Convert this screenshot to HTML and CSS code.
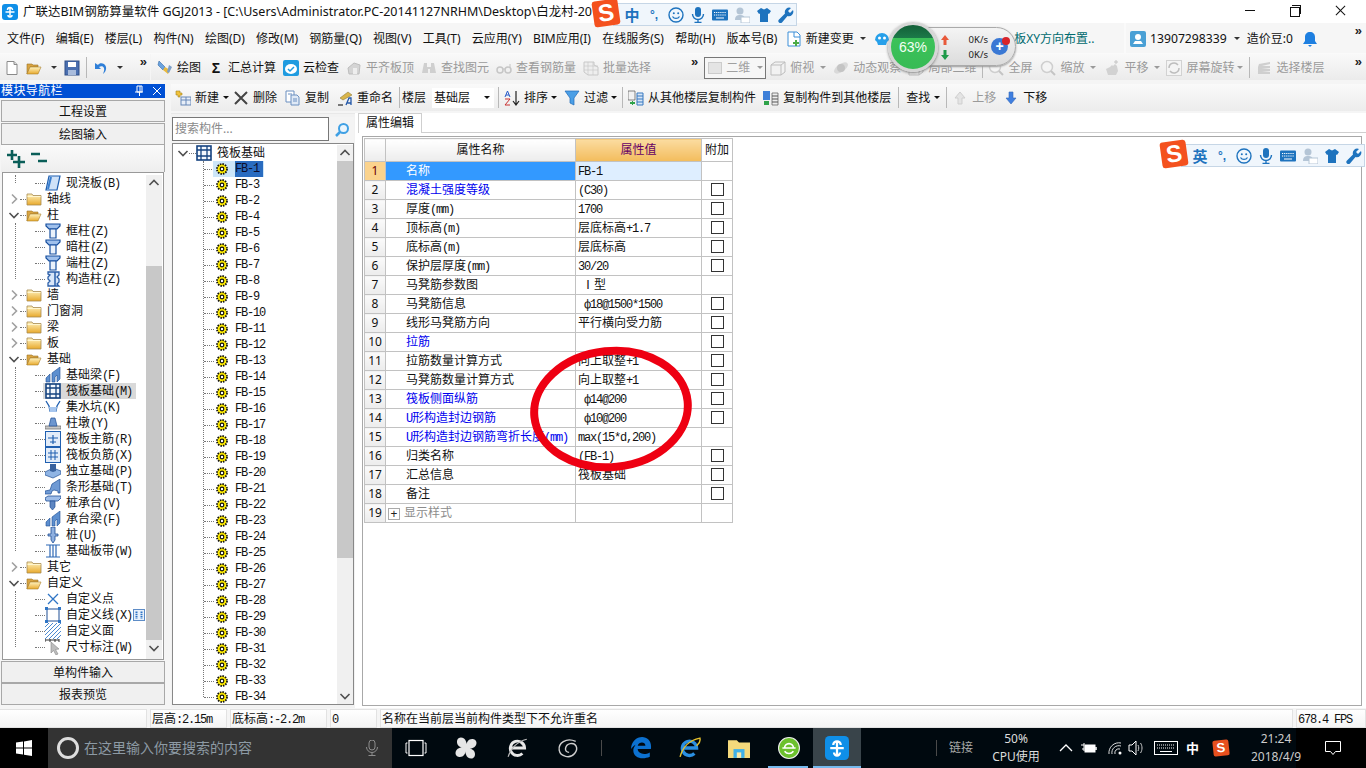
FILE: index.html
```html
<!DOCTYPE html>
<html lang="zh-CN">
<head>
<meta charset="utf-8">
<title>广联达BIM钢筋算量软件 GGJ2013</title>
<link rel="stylesheet" href="styles.css">
</head>
<body>
<svg class="defs" xmlns="http://www.w3.org/2000/svg">
<defs>
<linearGradient id="gf" x1="0" y1="0" x2="0" y2="1"><stop offset="0" stop-color="#fff3c0"/><stop offset="1" stop-color="#e8a92c"/></linearGradient>
<symbol id="app" viewBox="0 0 16 16"><rect width="16" height="16" rx="3" fill="#0f8fe8"/><path d="M8 3.500v9M3.500 8h9M5.500 6a2 2 0 0 1 5 0M6 11a2 2 0 0 0 4 0" fill="none" stroke="#fff" stroke-width="1.500"/></symbol>
<symbol id="doc" viewBox="0 0 16 16"><path d="M3 1.500h7l3 3v10H3z" fill="#fff" stroke="#8a8a8a"/><path d="M10 1.500v3h3" fill="#ddd" stroke="#8a8a8a"/></symbol>
<symbol id="open" viewBox="0 0 16 16"><path d="M1 4h5l1 1h5v2H4L1 14z" fill="#d9a441" stroke="#9a7326" stroke-width=".6"/><path d="M4 7h11l-3 7H1z" fill="url(#gf)" stroke="#a9802d" stroke-width=".6"/></symbol>
<symbol id="folder" viewBox="0 0 16 16"><path d="M1 3h5l1 1.500h8V14H1z" fill="url(#gf)" stroke="#a78a52" stroke-width=".8"/><path d="M1.500 5.500h13" stroke="#fff6cf"/></symbol>
<symbol id="save" viewBox="0 0 16 16"><rect x="1" y="1" width="14" height="14" fill="#4a6fb0" stroke="#2f4f88"/><rect x="4" y="2" width="8" height="5" fill="#fff"/><rect x="4" y="10" width="8" height="5" fill="#a9bcdc"/></symbol>
<symbol id="undo" viewBox="0 0 16 16"><path d="M3 3v6h6L7 7c3-2 6 0 5 4l-1 3c4-3 4-8 1-10-2-1.500-5-1-6 1z" fill="#2f7fd8"/></symbol>
<symbol id="brush" viewBox="0 0 16 16"><path d="M2 1l6 6-2 3-5-5z" fill="#6aa2de" stroke="#346ba8" stroke-width=".6"/><path d="M6 10l2-3 5 3-2 4z" fill="#e9b93c"/><path d="M12 5l3 2-3 6-2-1z" fill="#7c9fc8"/></symbol>
<symbol id="cloud" viewBox="0 0 16 16"><rect width="16" height="16" rx="2" fill="#1f9be0"/><ellipse cx="8" cy="9" rx="6" ry="5" fill="#fff"/><path d="M5 9l2 2 4-4" fill="none" stroke="#1f9be0" stroke-width="1.500"/></symbol>
<symbol id="gblock" viewBox="0 0 16 16"><path d="M2 8l6-5 6 2-1 9H3z" fill="#d4d4d4" stroke="#bdbdbd"/><path d="M7 8h4v6H7z" fill="#eee"/></symbol>
<symbol id="gbin" viewBox="0 0 16 16"><path d="M3 3h3v4h4V3h3l2 10H9V9H7v4H1z" fill="#cfcfcf"/></symbol>
<symbol id="gglass" viewBox="0 0 16 16"><circle cx="4" cy="10" r="3" fill="none" stroke="#c6c6c6" stroke-width="1.500"/><circle cx="12" cy="10" r="3" fill="none" stroke="#c6c6c6" stroke-width="1.500"/><path d="M7 9h2M14 7V4" stroke="#c6c6c6"/></symbol>
<symbol id="ggrid" viewBox="0 0 16 16"><path d="M1 2h10v3l4 2v8H5l-4-3z" fill="#eee" stroke="#c8c8c8"/><path d="M1 6h14M1 10h14M5 2v13M10 2v13" stroke="#c8c8c8" stroke-width=".7"/></symbol>
<symbol id="gbox" viewBox="0 0 16 16"><path d="M1 5l4-3h10v10l-4 3H1z" fill="#f2f2f2" stroke="#bdbdbd"/><path d="M1 5h10v10M11 5l4-3" fill="none" stroke="#bdbdbd"/></symbol>
<symbol id="gorbit" viewBox="0 0 16 16"><ellipse cx="8" cy="8" rx="8" ry="4" transform="rotate(-35 8 8)" fill="#d9d9d9"/><circle cx="8" cy="8" r="4" fill="#c4c4c4"/></symbol>
<symbol id="gzoom" viewBox="0 0 16 16"><circle cx="7" cy="7" r="5.500" fill="#f5f5f5" stroke="#cfcfcf" stroke-width="1.500"/><path d="M11 11l4 4" stroke="#c4c4c4" stroke-width="2"/></symbol>
<symbol id="ghand" viewBox="0 0 16 16"><path d="M2 9l4-2 2-2 1 1 2-2 2 2 1 5-2 4H4z" fill="#d2d2d2"/><path d="M12 0v4M10 2h4" stroke="#c4c4c4"/></symbol>
<symbol id="grot" viewBox="0 0 16 16"><rect x=".5" y=".5" width="15" height="15" fill="#f4f4f4" stroke="#d2d2d2"/><path d="M3 8a5 5 0 0 1 9-3M13 8a5 5 0 0 1-9 3" fill="none" stroke="#bdbdbd" stroke-width="1.500"/></symbol>
<symbol id="gfloor" viewBox="0 0 16 16"><path d="M3 4l11-2v2L6 6h8v2H6l8 1v2H6l8 1v2H2V7z" fill="#cfcfcf"/></symbol>
<symbol id="newc" viewBox="0 0 16 16"><path d="M2 1h9l3 3v11H2z" fill="#fff" stroke="#3d8fd8"/><path d="M8 1v5h6" fill="none" stroke="#3d8fd8"/><path d="M9 9h2v2h2v2h-2v2H9v-2H7v-2h2z" fill="#4cab46"/></symbol>
<symbol id="face" viewBox="0 0 16 16"><path d="M1 9a7 7 0 0 1 14 0l-2 2-1 3H4l-1-3z" fill="#27a0ea"/><circle cx="5.500" cy="7" r="1.500" fill="#fff"/><circle cx="10.500" cy="7" r="1.500" fill="#fff"/></symbol>
<symbol id="user" viewBox="0 0 16 16"><rect width="16" height="16" rx="2" fill="#4aa0d5"/><circle cx="8" cy="6" r="3" fill="#fff"/><path d="M3 13h10l-2-3H5z" fill="#fff"/></symbol>
<symbol id="bell" viewBox="0 0 16 16"><path d="M8 1c3 0 5 2 5 5v4l2 3H1l2-3V6c0-3 2-5 5-5z" fill="#1e7fe0"/><path d="M6 14h4l-2 2z" fill="#1e7fe0"/></symbol>
<symbol id="newb" viewBox="0 0 16 16"><path d="M1 1h4v2h2v2H5v2H3V5H1z" fill="#f2c23a" stroke="#a38421" stroke-width=".6"/><rect x="6" y="7" width="10" height="8" fill="#e7eef8" stroke="#6787b7"/><path d="M6 10h10M11 7v8" stroke="#6787b7"/></symbol>
<symbol id="del" viewBox="0 0 16 16"><path d="M2 2l12 12M14 2L2 14" stroke="#444" stroke-width="2"/></symbol>
<symbol id="copy" viewBox="0 0 16 16"><path d="M1 1h8v11H1z" fill="#fff" stroke="#6b8fc0"/><path d="M6 5h6l2 2v8H6z" fill="#dfe9f6" stroke="#6b8fc0"/><path d="M3 4h4M8 9h4M8 11h4" stroke="#6b8fc0"/></symbol>
<symbol id="rename" viewBox="0 0 16 16"><path d="M3 8l8-6 4 3-9 5z" fill="#d9b54a" stroke="#8d7a3c" stroke-width=".6"/><path d="M9 15l3-7h2v7M10.500 13h3" fill="none" stroke="#2458a8" stroke-width="1.300"/><path d="M1 15h5" stroke="#777" stroke-width="2"/></symbol>
<symbol id="sort" viewBox="0 0 16 16"><path d="M1 7l2.500-6L6 7M2 5h3" fill="none" stroke="#2458c8"/><path d="M1 9h5L1 15h5" fill="none" stroke="#c83030"/><path d="M12 1v13M9 11l3 4 3-4" fill="none" stroke="#222" stroke-width="1.200"/></symbol>
<symbol id="filter" viewBox="0 0 16 16"><path d="M1 1h14L10 8v7l-4-2V8z" fill="#4b9fe6" stroke="#1f6ab8" stroke-width=".7"/></symbol>
<symbol id="fcopy" viewBox="0 0 16 16"><path d="M0 1h7v9H0z" fill="#f2f2f2" stroke="#555" stroke-width=".7"/><path d="M9 3h6v12H9z" fill="#d8e6f6" stroke="#3778c0"/><path d="M9 6h6M9 9h6M9 12h6" stroke="#3778c0"/><path d="M2 12h2v-1h1v1h2v2H5v1H4v-1H2z" fill="#2fa34a"/></symbol>
<symbol id="tcopy" viewBox="0 0 16 16"><path d="M0 1h7v9H0z" fill="#3d7fd8"/><path d="M9 3h6v12H9z" fill="#eee" stroke="#555" stroke-width=".7"/><path d="M9 6h6M9 9h6M9 12h6" stroke="#555"/><path d="M1 11h5v4H1z" fill="#2fa34a"/></symbol>
<symbol id="up" viewBox="0 0 16 16"><path d="M8 2l5 6h-3v6H6V8H3z" fill="#e4e4e4" stroke="#cfcfcf"/></symbol>
<symbol id="down" viewBox="0 0 16 16"><path d="M6 2h4v6h3l-5 6-5-6h3z" fill="#3f7fe0" stroke="#3468b8" stroke-width=".6"/></symbol>
<symbol id="search" viewBox="0 0 16 16"><circle cx="9.500" cy="6.500" r="4.500" fill="#eaf5fd" stroke="#3fa0e4" stroke-width="2"/><path d="M6 10l-4 4" stroke="#3fa0e4" stroke-width="2.500"/></symbol>
<symbol id="plus2" viewBox="0 0 18 18"><path d="M5 0v10M0 5h10M12 6v12M6 12h12" stroke="#0a5e58" stroke-width="2.600"/></symbol>
<symbol id="minus2" viewBox="0 0 18 18"><path d="M1 4h9M8 11h9" stroke="#0a5e58" stroke-width="2.600"/></symbol>
<symbol id="chevr" viewBox="0 0 12 12"><path d="M4 1.500L8.500 6 4 10.500" fill="none" stroke="#a0a0a0" stroke-width="1.600"/></symbol>
<symbol id="chevd" viewBox="0 0 12 12"><path d="M1.500 4L6 8.500 10.500 4" fill="none" stroke="#505050" stroke-width="1.600"/></symbol>
<symbol id="chevu" viewBox="0 0 12 12"><path d="M1.500 8L6 3.500 10.500 8" fill="none" stroke="#505050" stroke-width="1.600"/></symbol>
<symbol id="slab" viewBox="0 0 16 16"><path d="M4 1h11l-3 14H1z" fill="#cfe2f8" stroke="#1f5fb0" stroke-width="1.200"/><path d="M3 14L6 2" stroke="#3a7fd0" stroke-width="2"/></symbol>
<symbol id="tcol" viewBox="0 0 16 16"><path d="M1 1h14v2l-3 3H4L1 3z" fill="#9fc0ec" stroke="#174f9f" stroke-width="1.200"/><path d="M5 6h6v9H5z" fill="#e9f1fb" stroke="#174f9f" stroke-width="1.200"/></symbol>
<symbol id="gcol" viewBox="0 0 16 16"><path d="M3 1h11v3l-2 2 2 2v3l-2 2 2 2H3v-3l2-2-2-2V6l2-2-2-1z" fill="#d8e6f8" stroke="#2a5ea8" stroke-width="1.300"/><path d="M10 1v14" stroke="#2a5ea8" stroke-width="1.500"/></symbol>
<symbol id="beam" viewBox="0 0 16 16"><path d="M1 15v-4l4-4v8zM7 15V6l8-6v12l-3 3V8l-2 2v5z" fill="#5d8fcf" stroke="#1f4f95" stroke-width=".6"/></symbol>
<symbol id="raft" viewBox="0 0 16 16"><rect x="1" y="1" width="14" height="14" fill="#f4f8fd" stroke="#14427f" stroke-width="1.600"/><path d="M1 5h14M1 11h14M5 1v14M11 1v14" stroke="#14427f" stroke-width="1.300"/></symbol>
<symbol id="pit" viewBox="0 0 16 16"><path d="M1 2l3 5 1 5h6l1-5 3-5" fill="none" stroke="#1f5fb0" stroke-width="1.300"/><path d="M4 8h8l-1 5H5z" fill="#a7c6ee"/></symbol>
<symbol id="pier" viewBox="0 0 16 16"><path d="M0 11h16v3H0z" fill="#c8c8c8" stroke="#666" stroke-width=".7"/><path d="M6 3h4l2 8H4z" fill="#6d96cf" stroke="#1f4f95" stroke-width=".7"/></symbol>
<symbol id="rmain" viewBox="0 0 16 16"><rect x=".5" y=".5" width="15" height="15" fill="#e2ecf9" stroke="#1f5fb0"/><path d="M3 7h10M8 4v9M5 11h6" stroke="#1f5fb0" stroke-width="1.200" fill="none"/></symbol>
<symbol id="rneg" viewBox="0 0 16 16"><rect x=".5" y=".5" width="15" height="15" fill="#e2ecf9" stroke="#1f5fb0"/><path d="M3 6h10M3 10h10M6 3v10M10 3v10" stroke="#1f5fb0"/></symbol>
<symbol id="foot" viewBox="0 0 16 16"><path d="M0 9l8-4 8 3v3l-8 4-8-3z" fill="#8fb4e4" stroke="#1f4f95" stroke-width=".7"/><path d="M5 1h6v7l-3 1-3-1z" fill="#39629e"/></symbol>
<symbol id="strip" viewBox="0 0 16 16"><path d="M0 15v-3l5-1 2-6 8-5v14h-2V12l-4-1-2 1-1 3z" fill="#6f9ad4" stroke="#1f4f95" stroke-width=".7"/></symbol>
<symbol id="cap" viewBox="0 0 16 16"><path d="M0 3l3-2h13v2l-3 3H1z" fill="#9ebde9" stroke="#1f4f95" stroke-width=".8"/><path d="M5 6h5v6l-2.500 3L5 12z" fill="#5d86c2" stroke="#1f4f95" stroke-width=".7"/></symbol>
<symbol id="pile" viewBox="0 0 16 16"><path d="M6 0h4v7h3v2h-3v4l-2 3-2-3V9H3V7h3z" fill="#8fb0e0" stroke="#1f4f95" stroke-width=".8"/></symbol>
<symbol id="band" viewBox="0 0 16 16"><path d="M1 2h14M1 14h14M5 2v12M11 2v12M8 2v12" stroke="#2d68b5" stroke-width="1.200"/></symbol>
<symbol id="pt" viewBox="0 0 16 16"><path d="M3 3l10 10M13 3L3 13" stroke="#2f75c5" stroke-width="1.300"/></symbol>
<symbol id="ln" viewBox="0 0 16 16"><rect x="2" y="2" width="12" height="12" fill="none" stroke="#1f4f95"/><path d="M0 0h3v3H0zM13 0h3v3h-3zM0 13h3v3H0zM13 13h3v3h-3z" fill="#2f75c5"/></symbol>
<symbol id="hatch" viewBox="0 0 16 16"><path d="M0 4l4-4M0 8l8-8M0 12L12 0M0 16L16 0M4 16L16 4M8 16l8-8M12 16l4-4" stroke="#4c8ad0"/></symbol>
<symbol id="dim" viewBox="0 0 16 16"><path d="M0 1h14M0 0v3M5 0v3M10 0v3M14 0v3" stroke="#333"/><path d="M6 3l8 7-3.500.5L13 15l-2 1-2.500-4.500L6 14z" fill="#bdbdbd" stroke="#888" stroke-width=".6"/></symbol>
<symbol id="fb" viewBox="0 0 12 12"><circle cx="6" cy="6" r="5" fill="#ffec00" stroke="#111" stroke-dasharray="1.500 1.100" stroke-width="1.800"/><circle cx="6" cy="6" r="1.800" fill="#fff" stroke="#111" stroke-width="1.200"/></symbol>
<symbol id="columns" viewBox="0 0 12 12"><rect x=".5" y=".5" width="11" height="11" fill="#e8f1fb" stroke="#5e8cc6"/><path d="M3.500 2.500v7M8.500 2.500v7" stroke="#2f75c5" stroke-width="2" stroke-dasharray="1.500 .7"/></symbol>
<symbol id="smile" viewBox="0 0 16 16"><circle cx="8" cy="8" r="7" fill="none" stroke="#1e73be" stroke-width="1.400"/><circle cx="5.800" cy="6.200" r="1" fill="#1e73be"/><circle cx="10.200" cy="6.200" r="1" fill="#1e73be"/><path d="M4.500 9.500c1.500 2.500 5.500 2.500 7 0" fill="none" stroke="#1e73be" stroke-width="1.300"/></symbol>
<symbol id="mic" viewBox="0 0 16 16"><rect x="5" y="0" width="6" height="10" rx="3" fill="#1e73be"/><path d="M2.500 7a5.500 5.500 0 0 0 11 0M8 12.500V15M4.500 15.500h7" fill="none" stroke="#1e73be" stroke-width="1.400"/></symbol>
<symbol id="kb" viewBox="0 0 16 16"><rect y="2.500" width="16" height="11" rx="1" fill="#1e73be"/><path d="M2 5.500h12M2 8h12" stroke="#fff" stroke-dasharray="1.200 .9"/><path d="M4 11h8" stroke="#fff"/></symbol>
<symbol id="ppl" viewBox="0 0 16 16"><circle cx="6" cy="4" r="3.500" fill="#b4c5d6"/><path d="M1 13c0-4 2-5 5-5s5 1 5 5z" fill="#b4c5d6"/><rect x="7" y="10" width="9" height="6" fill="#fff" stroke="#b4c5d6"/></symbol>
<symbol id="shirt" viewBox="0 0 16 16"><path d="M5 1l3 1.500L11 1l4 3-2 3-1-.5V15H4V6.500L3 7 1 4z" fill="#1e73be"/></symbol>
<symbol id="wrench" viewBox="0 0 16 16"><path d="M15 3l-3 3-2-2 3-3a4.500 4.500 0 0 0-6 5.500L1 12.500a2 2 0 0 0 3 3L9.500 9A4.500 4.500 0 0 0 15 3z" fill="#1e73be"/></symbol>
<symbol id="win" viewBox="0 0 16 16"><path d="M0 2.500L7 1.500v6H0zM8 1.400L16 0v7.500H8zM0 8.500h7v6l-7-1zM8 8.500h8V16l-8-1.300z" fill="#fff"/></symbol>
<symbol id="tmic" viewBox="0 0 16 16"><rect x="5" y="0" width="6" height="10" rx="3" fill="none" stroke="#8d8d8d"/><path d="M2.500 7a5.500 5.500 0 0 0 11 0M8 12.500V15M4.500 15.500h7" fill="none" stroke="#8d8d8d"/></symbol>
<symbol id="tview" viewBox="0 0 22 16"><rect x="4" y=".5" width="14" height="15" fill="none" stroke="#fff" stroke-width="1.200"/><path d="M2.500 3H1v10h1.500M19.500 3H21v10h-1.500" fill="none" stroke="#fff"/></symbol>
<symbol id="fan" viewBox="0 0 20 20"><path d="M10 10C4 10 1 7 2 3s7-3 8 1c1 2 0 4 0 6zM10 10c0-6 3-9 7-8s3 7-1 8c-2 1-4 0-6 0zM10 10c6 0 9 3 8 7s-7 3-8-1c-1-2 0-4 0-6zM10 10c0 6-3 9-7 8s-3-7 1-8c2-1 4 0 6 0z" fill="#e6e6e6"/></symbol>
<symbol id="eie" viewBox="0 0 20 20"><path d="M3 10h13a6.500 6.500 0 1 0-2 5" fill="none" stroke="#e8e8e8" stroke-width="2.600"/><path d="M1 18c2-7 8-14 17-16" fill="none" stroke="#bbb"/></symbol>
<symbol id="swirl" viewBox="0 0 20 20"><path d="M17 4C8 0 1 6 2 12s10 8 14 3 1-10-4-9-6 8-1 8" fill="none" stroke="#cfcfcf" stroke-width="1.300"/></symbol>
<symbol id="edge" viewBox="0 0 20 20"><path d="M1 11C1 4 6 0 11 0s9 4 8 11H7c0 4 6 6 11 3v4c-7 3-15 1-15-6 0-2 1-3 2-5 0 0-2 1-4 4zM7 8h7c0-4-6-4-7 0z" fill="#0c71d0"/></symbol>
<symbol id="ie" viewBox="0 0 20 20"><path d="M3 10h13a6.500 6.500 0 1 0-2 5" fill="none" stroke="#2a8fe0" stroke-width="3"/><path d="M1 18C3 10 9 3 19 1c1 4-2 6-3 7" fill="none" stroke="#e6c22e" stroke-width="1.300"/></symbol>
<symbol id="expl" viewBox="0 0 20 20"><path d="M0 3h8l2 2h10v14H0z" fill="#f4d97c"/><rect x="5" y="11" width="10" height="8" fill="#3fb0e8"/><rect x="8" y="14" width="4" height="5" fill="#fbe9a8"/></symbol>
<symbol id="s360" viewBox="0 0 20 20"><circle cx="10" cy="10" r="9.500" fill="#6cc12d" stroke="#eee"/><path d="M4 10h12M6 10a4 4 0 0 1 8 0M6 13a5 5 0 0 0 8 0" fill="none" stroke="#fff" stroke-width="1.500"/></symbol>
<symbol id="caret-up" viewBox="0 0 16 16"><path d="M2 11l6-6 6 6" fill="none" stroke="#fff" stroke-width="1.300"/></symbol>
<symbol id="batt" viewBox="0 0 16 16"><path d="M0 5h3M1 9h2M3 3v8" stroke="#fff"/><rect x="4" y="5" width="10" height="7" fill="#fff" stroke="#fff"/><path d="M15 7v3" stroke="#fff" stroke-width="1.500"/></symbol>
<symbol id="wifi" viewBox="0 0 16 16"><path d="M2 14a10 10 0 0 1 12-11M5 14a7 7 0 0 1 9-8M8 14a4 4 0 0 1 5-5" fill="none" stroke="#ddd"/><circle cx="13" cy="13" r="1.500" fill="#fff"/></symbol>
<symbol id="vol" viewBox="0 0 16 16"><path d="M1 5h3l4-4v14l-4-4H1z" fill="none" stroke="#fff"/><path d="M10 5c1 2 1 4 0 6M12.500 3c2 3 2 7 0 10" fill="none" stroke="#ccc"/></symbol>
<symbol id="tkb" viewBox="0 0 24 16"><rect x=".5" y="1.500" width="23" height="13" fill="none" stroke="#fff"/><path d="M3 5h18M3 8h18" stroke="#fff" stroke-dasharray="1 1"/><path d="M6 11.500h12" stroke="#fff"/></symbol>
<symbol id="note" viewBox="0 0 16 16"><path d="M.5 1.500h15v10h-5l-2.500 3-2.500-3h-5z" fill="none" stroke="#fff"/></symbol>
<symbol id="pin" viewBox="0 0 12 12"><path d="M4 1h5v6H4zM2 7h8M6.500 7v4M7 1v6" fill="none" stroke="#fff"/></symbol>
<symbol id="close" viewBox="0 0 12 12"><path d="M2 2l8 8M10 2l-8 8" stroke="#fff"/></symbol>
<symbol id="aup" viewBox="0 0 8 10"><path d="M4 0l4 5H5.500v5h-3V5H0z" fill="#e8593a"/></symbol>
<symbol id="adn" viewBox="0 0 8 10"><path d="M2.500 0h3v5H8l-4 5-4-5h2.500z" fill="#1f9a4a"/></symbol>
</defs>
</svg>

<div class="app">
  <header class="titlebar">
    <svg class="i app-icon"><use href="#app"/></svg>
    <span class="title-text">广联达BIM钢筋算量软件 GGJ2013 - [C:\Users\Administrator.PC-20141127NRHM\Desktop\白龙村-20</span>
    <div class="winbtns"><span class="wb wb-min"></span><span class="wb wb-max"></span><span class="wb wb-close"></span></div>
  </header>

  <nav class="menubar">
    <div class="menu-main">
      <span>文件(F)</span><span>编辑(E)</span><span>楼层(L)</span><span>构件(N)</span><span>绘图(D)</span><span>修改(M)</span><span>钢筋量(Q)</span><span>视图(V)</span><span>工具(T)</span><span>云应用(Y)</span><span>BIM应用(I)</span><span>在线服务(S)</span><span>帮助(H)</span><span>版本号(B)</span>
      <span class="t menu-new"><svg class="i"><use href="#newc"/></svg>新建变更</span><span class="caret"></span>
      <svg class="i menu-face"><use href="#face"/></svg>
      <span class="teal">板XY方向布置..</span>
    </div>
    <div class="menu-user">
      <svg class="i"><use href="#user"/></svg><span class="phone">13907298339</span><span class="caret"></span><span class="m-l6">造价豆:0</span><svg class="i m-l9"><use href="#bell"/></svg><span class="more">»</span>
    </div>
  </nav>

  <div class="toolbar1">
    <div class="band band-quick">
      <svg class="i"><use href="#doc"/></svg>
      <svg class="i m-l6"><use href="#open"/></svg><span class="caret m-l8"></span>
      <svg class="i m-l6"><use href="#save"/></svg><span class="vsep m-l6"></span>
      <svg class="i m-l5"><use href="#undo"/></svg><span class="caret m-l8"></span><span class="more">»</span>
    </div>
    <div class="band band-tools">
      <span class="t"><svg class="i"><use href="#brush"/></svg>绘图</span>
      <span class="t m-l7"><span class="sigma">Σ</span>汇总计算</span>
      <span class="t m-l7"><svg class="i"><use href="#cloud"/></svg>云检查</span>
      <span class="t m-l7 off"><svg class="i"><use href="#gblock"/></svg>平齐板顶</span>
      <span class="t m-l7 off"><svg class="i"><use href="#gbin"/></svg>查找图元</span>
      <span class="t m-l7 off"><svg class="i"><use href="#gglass"/></svg>查看钢筋量</span>
      <span class="t m-l7 off"><svg class="i"><use href="#ggrid"/></svg>批量选择</span>
      <span class="more m-l40">»</span>
      <span class="combo2 m-l6"><span class="swatch"></span>二维<span class="caret grey"></span></span>
      <span class="t m-l4 off"><svg class="i"><use href="#gbox"/></svg>俯视</span><span class="caret grey m-l5"></span>
      <span class="t m-l6 off"><svg class="i"><use href="#gorbit"/></svg>动态观察</span>
      <span class="t m-l7 off"><svg class="i"><use href="#gbox"/></svg>局部二维</span><span class="vsep m-l6"></span>
      <span class="t m-l5 off"><svg class="i"><use href="#gzoom"/></svg>全屏</span>
      <span class="t m-l8 off"><svg class="i"><use href="#gzoom"/></svg>缩放</span><span class="caret grey m-l5"></span>
      <span class="t m-l7 off"><svg class="i"><use href="#ghand"/></svg>平移</span><span class="caret grey m-l5"></span>
      <span class="t m-l5 off"><svg class="i"><use href="#grot"/></svg>屏幕旋转</span><span class="caret grey m-l2"></span><span class="vsep m-l5"></span>
      <span class="t m-l6 off"><svg class="i"><use href="#gfloor"/></svg>选择楼层</span>
      <span class="more more-end">»</span>
    </div>
  </div>

  <main class="workspace">
    <aside class="nav">
      <div class="nav-head"><span>模块导航栏</span><svg class="nav-ic"><use href="#pin"/></svg><svg class="nav-ic"><use href="#close"/></svg></div>
      <div class="nav-btn nav-first">工程设置</div>
      <div class="nav-btn">绘图输入</div>
      <div class="nav-ctl"><svg class="ctl"><use href="#plus2"/></svg><svg class="ctl"><use href="#minus2"/></svg></div>
      <div class="nav-box">
        <div class="tree">
          <div class="kids">
            <div class="tr"><span class="dash"></span><svg class="i"><use href="#slab"/></svg><span class="lb">现浇板<span class="lat">(B)</span></span></div>
          </div>
          <div class="tr top"><svg class="chev"><use href="#chevr"/></svg><span class="dash2"></span><svg class="i"><use href="#folder"/></svg><span class="lb">轴线</span></div>
          <div class="tr top"><svg class="chev"><use href="#chevd"/></svg><span class="dash2"></span><svg class="i"><use href="#open"/></svg><span class="lb">柱</span></div>
          <div class="kids">
            <div class="tr"><span class="dash"></span><svg class="i"><use href="#tcol"/></svg><span class="lb">框柱<span class="lat">(Z)</span></span></div>
            <div class="tr"><span class="dash"></span><svg class="i"><use href="#tcol"/></svg><span class="lb">暗柱<span class="lat">(Z)</span></span></div>
            <div class="tr"><span class="dash"></span><svg class="i"><use href="#tcol"/></svg><span class="lb">端柱<span class="lat">(Z)</span></span></div>
            <div class="tr"><span class="dash"></span><svg class="i"><use href="#gcol"/></svg><span class="lb">构造柱<span class="lat">(Z)</span></span></div>
          </div>
          <div class="tr top"><svg class="chev"><use href="#chevr"/></svg><span class="dash2"></span><svg class="i"><use href="#folder"/></svg><span class="lb">墙</span></div>
          <div class="tr top"><svg class="chev"><use href="#chevr"/></svg><span class="dash2"></span><svg class="i"><use href="#folder"/></svg><span class="lb">门窗洞</span></div>
          <div class="tr top"><svg class="chev"><use href="#chevr"/></svg><span class="dash2"></span><svg class="i"><use href="#folder"/></svg><span class="lb">梁</span></div>
          <div class="tr top"><svg class="chev"><use href="#chevr"/></svg><span class="dash2"></span><svg class="i"><use href="#folder"/></svg><span class="lb">板</span></div>
          <div class="tr top"><svg class="chev"><use href="#chevd"/></svg><span class="dash2"></span><svg class="i"><use href="#open"/></svg><span class="lb">基础</span></div>
          <div class="kids">
            <div class="tr"><span class="dash"></span><svg class="i"><use href="#beam"/></svg><span class="lb">基础梁<span class="lat">(F)</span></span></div>
            <div class="tr"><span class="dash"></span><span class="hl"><svg class="i"><use href="#raft"/></svg><span class="lb">筏板基础<span class="lat">(M)</span></span></span></div>
            <div class="tr"><span class="dash"></span><svg class="i"><use href="#pit"/></svg><span class="lb">集水坑<span class="lat">(K)</span></span></div>
            <div class="tr"><span class="dash"></span><svg class="i"><use href="#pier"/></svg><span class="lb">柱墩<span class="lat">(Y)</span></span></div>
            <div class="tr"><span class="dash"></span><svg class="i"><use href="#rmain"/></svg><span class="lb">筏板主筋<span class="lat">(R)</span></span></div>
            <div class="tr"><span class="dash"></span><svg class="i"><use href="#rneg"/></svg><span class="lb">筏板负筋<span class="lat">(X)</span></span></div>
            <div class="tr"><span class="dash"></span><svg class="i"><use href="#foot"/></svg><span class="lb">独立基础<span class="lat">(P)</span></span></div>
            <div class="tr"><span class="dash"></span><svg class="i"><use href="#strip"/></svg><span class="lb">条形基础<span class="lat">(T)</span></span></div>
            <div class="tr"><span class="dash"></span><svg class="i"><use href="#cap"/></svg><span class="lb">桩承台<span class="lat">(V)</span></span></div>
            <div class="tr"><span class="dash"></span><svg class="i"><use href="#beam"/></svg><span class="lb">承台梁<span class="lat">(F)</span></span></div>
            <div class="tr"><span class="dash"></span><svg class="i"><use href="#pile"/></svg><span class="lb">桩<span class="lat">(U)</span></span></div>
            <div class="tr"><span class="dash"></span><svg class="i"><use href="#band"/></svg><span class="lb">基础板带<span class="lat">(W)</span></span></div>
          </div>
          <div class="tr top"><svg class="chev"><use href="#chevr"/></svg><span class="dash2"></span><svg class="i"><use href="#folder"/></svg><span class="lb">其它</span></div>
          <div class="tr top"><svg class="chev"><use href="#chevd"/></svg><span class="dash2"></span><svg class="i"><use href="#open"/></svg><span class="lb">自定义</span></div>
          <div class="kids">
            <div class="tr"><span class="dash"></span><svg class="i"><use href="#pt"/></svg><span class="lb">自定义点</span></div>
            <div class="tr"><span class="dash"></span><svg class="i"><use href="#ln"/></svg><span class="lb">自定义线<span class="lat">(X)</span></span><svg class="col-ic"><use href="#columns"/></svg></div>
            <div class="tr"><span class="dash"></span><svg class="i"><use href="#hatch"/></svg><span class="lb">自定义面</span></div>
            <div class="tr"><span class="dash"></span><svg class="i"><use href="#dim"/></svg><span class="lb">尺寸标注<span class="lat">(W)</span></span></div>
          </div>
        </div>
        <div class="vs vs-nav"><span class="vs-arrow"><svg class="chev"><use href="#chevu"/></svg></span><span class="vs-space"></span><span class="vs-thumb"></span><span class="vs-arrow"><svg class="chev"><use href="#chevd"/></svg></span></div>
      </div>
      <div class="nav-btn nav-after">单构件输入</div>
      <div class="nav-btn">报表预览</div>
    </aside>

    <div class="right">
      <div class="toolbar2">
        <span class="t"><svg class="i"><use href="#newb"/></svg>新建</span><span class="caret dark m-l3"></span>
        <span class="t m-l3"><svg class="i"><use href="#del"/></svg>删除</span>
        <span class="t m-l8"><svg class="i"><use href="#copy"/></svg>复制</span>
        <span class="t m-l8"><svg class="i"><use href="#rename"/></svg>重命名</span>
        <span class="vsep m-l6"></span>
        <span class="m-l2">楼层</span>
        <span class="combo m-l6">基础层<span class="caret dark"></span></span>
        <span class="vsep m-l4"></span>
        <span class="t m-l5"><svg class="i"><use href="#sort"/></svg>排序</span><span class="caret dark m-l2"></span>
        <span class="t m-l6"><svg class="i"><use href="#filter"/></svg>过滤</span><span class="caret dark m-l2"></span>
        <span class="vsep m-l4"></span>
        <span class="t m-l5"><svg class="i"><use href="#fcopy"/></svg>从其他楼层复制构件</span>
        <span class="t m-l7"><svg class="i"><use href="#tcopy"/></svg>复制构件到其他楼层</span>
        <span class="vsep m-l7"></span>
        <span class="m-l7">查找</span><span class="caret dark m-l3"></span>
        <span class="vsep m-l5"></span>
        <span class="t m-l5 off"><svg class="i"><use href="#up"/></svg>上移</span>
        <span class="t m-l7"><svg class="i"><use href="#down"/></svg>下移</span>
      </div>

      <div class="panes">
        <section class="mid">
          <div class="searchrow"><div class="search-in">搜索构件...</div><div class="search-btn"><svg class="i"><use href="#search"/></svg></div></div>
          <div class="mid-box">
            <div class="tree tree-mid">
              <div class="tr"><svg class="chev chev-mid"><use href="#chevd"/></svg><span class="dash3"></span><svg class="i"><use href="#raft"/></svg><span class="lb">筏板基础</span></div>
              <div class="kids kids-mid">
                <div class="tr"><span class="dash4"></span><span class="sel"><svg class="fb"><use href="#fb"/></svg><span class="fbname fbname-on">FB-1</span></span></div>
                <div class="tr"><span class="dash4"></span><svg class="fb"><use href="#fb"/></svg><span class="fbname">FB-3</span></div>
                <div class="tr"><span class="dash4"></span><svg class="fb"><use href="#fb"/></svg><span class="fbname">FB-2</span></div>
                <div class="tr"><span class="dash4"></span><svg class="fb"><use href="#fb"/></svg><span class="fbname">FB-4</span></div>
                <div class="tr"><span class="dash4"></span><svg class="fb"><use href="#fb"/></svg><span class="fbname">FB-5</span></div>
                <div class="tr"><span class="dash4"></span><svg class="fb"><use href="#fb"/></svg><span class="fbname">FB-6</span></div>
                <div class="tr"><span class="dash4"></span><svg class="fb"><use href="#fb"/></svg><span class="fbname">FB-7</span></div>
                <div class="tr"><span class="dash4"></span><svg class="fb"><use href="#fb"/></svg><span class="fbname">FB-8</span></div>
                <div class="tr"><span class="dash4"></span><svg class="fb"><use href="#fb"/></svg><span class="fbname">FB-9</span></div>
                <div class="tr"><span class="dash4"></span><svg class="fb"><use href="#fb"/></svg><span class="fbname">FB-10</span></div>
                <div class="tr"><span class="dash4"></span><svg class="fb"><use href="#fb"/></svg><span class="fbname">FB-11</span></div>
                <div class="tr"><span class="dash4"></span><svg class="fb"><use href="#fb"/></svg><span class="fbname">FB-12</span></div>
                <div class="tr"><span class="dash4"></span><svg class="fb"><use href="#fb"/></svg><span class="fbname">FB-13</span></div>
                <div class="tr"><span class="dash4"></span><svg class="fb"><use href="#fb"/></svg><span class="fbname">FB-14</span></div>
                <div class="tr"><span class="dash4"></span><svg class="fb"><use href="#fb"/></svg><span class="fbname">FB-15</span></div>
                <div class="tr"><span class="dash4"></span><svg class="fb"><use href="#fb"/></svg><span class="fbname">FB-16</span></div>
                <div class="tr"><span class="dash4"></span><svg class="fb"><use href="#fb"/></svg><span class="fbname">FB-17</span></div>
                <div class="tr"><span class="dash4"></span><svg class="fb"><use href="#fb"/></svg><span class="fbname">FB-18</span></div>
                <div class="tr"><span class="dash4"></span><svg class="fb"><use href="#fb"/></svg><span class="fbname">FB-19</span></div>
                <div class="tr"><span class="dash4"></span><svg class="fb"><use href="#fb"/></svg><span class="fbname">FB-20</span></div>
                <div class="tr"><span class="dash4"></span><svg class="fb"><use href="#fb"/></svg><span class="fbname">FB-21</span></div>
                <div class="tr"><span class="dash4"></span><svg class="fb"><use href="#fb"/></svg><span class="fbname">FB-22</span></div>
                <div class="tr"><span class="dash4"></span><svg class="fb"><use href="#fb"/></svg><span class="fbname">FB-23</span></div>
                <div class="tr"><span class="dash4"></span><svg class="fb"><use href="#fb"/></svg><span class="fbname">FB-24</span></div>
                <div class="tr"><span class="dash4"></span><svg class="fb"><use href="#fb"/></svg><span class="fbname">FB-25</span></div>
                <div class="tr"><span class="dash4"></span><svg class="fb"><use href="#fb"/></svg><span class="fbname">FB-26</span></div>
                <div class="tr"><span class="dash4"></span><svg class="fb"><use href="#fb"/></svg><span class="fbname">FB-27</span></div>
                <div class="tr"><span class="dash4"></span><svg class="fb"><use href="#fb"/></svg><span class="fbname">FB-28</span></div>
                <div class="tr"><span class="dash4"></span><svg class="fb"><use href="#fb"/></svg><span class="fbname">FB-29</span></div>
                <div class="tr"><span class="dash4"></span><svg class="fb"><use href="#fb"/></svg><span class="fbname">FB-30</span></div>
                <div class="tr"><span class="dash4"></span><svg class="fb"><use href="#fb"/></svg><span class="fbname">FB-31</span></div>
                <div class="tr"><span class="dash4"></span><svg class="fb"><use href="#fb"/></svg><span class="fbname">FB-32</span></div>
                <div class="tr"><span class="dash4"></span><svg class="fb"><use href="#fb"/></svg><span class="fbname">FB-33</span></div>
                <div class="tr"><span class="dash4"></span><svg class="fb"><use href="#fb"/></svg><span class="fbname">FB-34</span></div>
              </div>
            </div>
            <div class="vs vs-mid"><span class="vs-arrow"><svg class="chev"><use href="#chevu"/></svg></span><span class="vs-thumb"></span><span class="vs-space"></span><span class="vs-arrow"><svg class="chev"><use href="#chevd"/></svg></span></div>
          </div>
        </section>

        <section class="props">
          <div class="tabs"><span class="tab">属性编辑</span></div>
          <div class="sheet">
            <table class="grid">
              <colgroup><col class="c-n"><col class="c-a"><col class="c-b"><col class="c-c"></colgroup>
              <thead><tr><th class="h-n"></th><th class="h-a">属性名称</th><th class="h-b">属性值</th><th class="h-c">附加</th></tr></thead>
              <tbody>
                <tr class="on"><td class="n">1</td><td class="a">名称</td><td class="b"><span class="lat">FB-1</span></td><td></td></tr>
                <tr><td class="n">2</td><td class="a link">混凝土强度等级</td><td class="b"><span class="lat">(C30)</span></td><td class="k"><span class="cb"></span></td></tr>
                <tr><td class="n">3</td><td class="a">厚度<span class="lat">(mm)</span></td><td class="b"><span class="lat">1700</span></td><td class="k"><span class="cb"></span></td></tr>
                <tr><td class="n">4</td><td class="a">顶标高<span class="lat">(m)</span></td><td class="b">层底标高<span class="lat">+1.7</span></td><td class="k"><span class="cb"></span></td></tr>
                <tr><td class="n">5</td><td class="a">底标高<span class="lat">(m)</span></td><td class="b">层底标高</td><td class="k"><span class="cb"></span></td></tr>
                <tr><td class="n">6</td><td class="a">保护层厚度<span class="lat">(mm)</span></td><td class="b"><span class="lat">30/20</span></td><td class="k"><span class="cb"></span></td></tr>
                <tr><td class="n">7</td><td class="a">马凳筋参数图</td><td class="b b-in">Ⅰ型</td><td></td></tr>
                <tr><td class="n">8</td><td class="a">马凳筋信息</td><td class="b"><span class="lat">&nbsp;ф18@1500*1500</span></td><td class="k"><span class="cb"></span></td></tr>
                <tr><td class="n">9</td><td class="a">线形马凳筋方向</td><td class="b">平行横向受力筋</td><td class="k"><span class="cb"></span></td></tr>
                <tr><td class="n">10</td><td class="a link">拉筋</td><td class="b"></td><td class="k"><span class="cb"></span></td></tr>
                <tr><td class="n">11</td><td class="a">拉筋数量计算方式</td><td class="b">向上取整<span class="lat">+1</span></td><td class="k"><span class="cb"></span></td></tr>
                <tr><td class="n">12</td><td class="a">马凳筋数量计算方式</td><td class="b">向上取整<span class="lat">+1</span></td><td class="k"><span class="cb"></span></td></tr>
                <tr><td class="n">13</td><td class="a link">筏板侧面纵筋</td><td class="b"><span class="lat">&nbsp;ф14@200</span></td><td class="k"><span class="cb"></span></td></tr>
                <tr><td class="n">14</td><td class="a link"><span class="lat">U</span>形构造封边钢筋</td><td class="b"><span class="lat">&nbsp;ф10@200</span></td><td class="k"><span class="cb"></span></td></tr>
                <tr><td class="n">15</td><td class="a link"><span class="lat">U</span>形构造封边钢筋弯折长度<span class="lat">(mm)</span></td><td class="b"><span class="lat">max(15*d,200)</span></td><td></td></tr>
                <tr><td class="n">16</td><td class="a">归类名称</td><td class="b"><span class="lat">(FB-1)</span></td><td class="k"><span class="cb"></span></td></tr>
                <tr><td class="n">17</td><td class="a">汇总信息</td><td class="b">筏板基础</td><td class="k"><span class="cb"></span></td></tr>
                <tr><td class="n">18</td><td class="a">备注</td><td class="b"></td><td class="k"><span class="cb"></span></td></tr>
                <tr><td class="n">19</td><td class="a a-more"><span class="pm">+</span>显示样式</td><td class="b"></td><td></td></tr>
              </tbody>
            </table>
          </div>
        </section>
      </div>
    </div>
  </main>

  <footer class="status">
    <span class="st st1"></span>
    <span class="st st2">层高<span class="lat">:2.15m</span></span>
    <span class="st st3">底标高<span class="lat">:-2.2m</span></span>
    <span class="st st4"><span class="lat">0</span></span>
    <span class="st st5">名称在当前层当前构件类型下不允许重名</span>
    <span class="st st6"><span class="lat">678.4 FPS</span></span>
  </footer>

  <footer class="taskbar">
    <div class="start"><svg class="win"><use href="#win"/></svg></div>
    <div class="tsearch"><span class="ring"></span><span class="ts-text">在这里输入你要搜索的内容</span><svg class="ts-mic"><use href="#tmic"/></svg></div>
    <div class="slot"><svg class="ti"><use href="#tview"/></svg></div>
    <div class="slot m-l2"><svg class="ti"><use href="#fan"/></svg></div>
    <div class="slot m-l4"><svg class="ti"><use href="#eie"/></svg></div>
    <div class="slot m-l2"><svg class="ti"><use href="#swirl"/></svg></div>
    <span class="tsep m-l9"></span>
    <div class="slot m-l15"><svg class="ti"><use href="#edge"/></svg></div>
    <div class="slot m-l1"><svg class="ti"><use href="#ie"/></svg></div>
    <div class="slot m-l1"><svg class="ti"><use href="#expl"/></svg></div>
    <div class="slot m-l2 run"><svg class="ti"><use href="#s360"/></svg></div>
    <div class="slot active"><svg class="ti ti-app"><use href="#app"/></svg></div>
    <span class="tsep m-l75"></span>
    <span class="tray-link m-l12">链接</span>
    <div class="cpu m-l13"><span>50%</span><span>CPU使用</span></div>
    <svg class="tr-i m-l12"><use href="#caret-up"/></svg>
    <svg class="tr-i m-l7"><use href="#batt"/></svg>
    <svg class="tr-i m-l10"><use href="#wifi"/></svg>
    <svg class="tr-i m-l5"><use href="#vol"/></svg>
    <svg class="tr-kb m-l10"><use href="#tkb"/></svg>
    <span class="tr-zh m-l8">中</span>
    <span class="s-mini m-l13">S</span>
    <div class="clock m-l17"><span>21:24</span><span>2018/4/9</span></div>
    <svg class="tr-i m-l19"><use href="#note"/></svg>
  </footer>
</div>

<div class="ime ime-top">
  <span class="ime-logo">S</span>
  <div class="ime-bar"><span class="ime-it ime-zh">中</span><span class="ime-it ime-p">°,</span><span class="ime-it"><svg class="i"><use href="#smile"/></svg></span><span class="ime-it"><svg class="i"><use href="#mic"/></svg></span><span class="ime-it"><svg class="i"><use href="#kb"/></svg></span><span class="ime-it"><svg class="i"><use href="#ppl"/></svg></span><span class="ime-it"><svg class="i"><use href="#shirt"/></svg></span><span class="ime-it"><svg class="i"><use href="#wrench"/></svg></span></div>
</div>
<div class="ime ime-side">
  <span class="ime-logo">S</span>
  <div class="ime-bar"><span class="ime-it ime-zh">英</span><span class="ime-it ime-p">°,</span><span class="ime-it"><svg class="i"><use href="#smile"/></svg></span><span class="ime-it"><svg class="i"><use href="#mic"/></svg></span><span class="ime-it"><svg class="i"><use href="#kb"/></svg></span><span class="ime-it"><svg class="i"><use href="#ppl"/></svg></span><span class="ime-it"><svg class="i"><use href="#shirt"/></svg></span><span class="ime-it"><svg class="i"><use href="#wrench"/></svg></span></div>
</div>

<div class="speed">
  <div class="pill">
    <div class="rates"><span class="rate"><svg class="arr"><use href="#aup"/></svg><span>0K/s</span></span><span class="rate"><svg class="arr"><use href="#adn"/></svg><span>0K/s</span></span></div>
    <span class="plus">+</span><span class="reddot"></span>
  </div>
  <div class="orb">63%</div>
</div>

<svg class="mark" viewBox="0 0 170 130"><ellipse cx="85" cy="64" rx="77" ry="58" fill="none" stroke="#ee0012" stroke-width="8" transform="rotate(-6 85 64)"/></svg>
</body>
</html>
```

FILE: styles.css
```css
* { box-sizing: border-box; }
html, body { margin: 0; padding: 0; width: 1366px; height: 768px; overflow: hidden; }
body { background: #f5f5f5; color: #111; font: 12px/16px "Noto Sans", "Noto Sans CJK SC", sans-serif; position: relative; }
.defs { position: absolute; width: 0; height: 0; }
.app { display: flex; flex-direction: column; width: 1366px; height: 768px; }
.i { width: 16px; height: 16px; flex: none; display: block; }
.lat { font-family: "Liberation Mono", monospace; font-size: 12px; letter-spacing: -1.2px; }

.m-l1 { margin-left: 1px; } .m-l2 { margin-left: 2px; } .m-l3 { margin-left: 3px; } .m-l4 { margin-left: 4px; }
.m-l5 { margin-left: 5px; } .m-l6 { margin-left: 6px; } .m-l7 { margin-left: 7px; } .m-l8 { margin-left: 8px; }
.m-l9 { margin-left: 9px; } .m-l10 { margin-left: 10px; } .m-l12 { margin-left: 12px; } .m-l13 { margin-left: 13px; }
.m-l15 { margin-left: 15px; } .m-l17 { margin-left: 17px; } .m-l19 { margin-left: 19px; } .m-l40 { margin-left: 40px; } .m-l75 { margin-left: 75px; }

.t { display: inline-flex; align-items: center; gap: 4px; white-space: nowrap; }
.off { color: #9a9a9a; }
.caret { width: 8px; height: 8px; flex: none; display: inline-flex; align-items: center; justify-content: center; margin-left: 5px; }
.caret::before { content: ""; border: 3px solid transparent; border-top: 3px solid #333; border-bottom: 0; }
.caret.grey::before { border-top-color: #9a9a9a; }
.caret.dark::before { border-top-color: #111; }
.caret.m-l2 { margin-left: 2px; } .caret.m-l3 { margin-left: 3px; } .caret.m-l5 { margin-left: 5px; } .caret.m-l8 { margin-left: 8px; }
.more { font: bold 13px/12px "Liberation Sans", sans-serif; margin-left: auto; align-self: flex-start; margin-top: 1px; color: #222; }
.more.m-l40 { margin-left: 40px; }
.more-end { margin-left: auto; }
.vsep { width: 1px; height: 21px; background: #b8b8b8; flex: none; }

/* title */
.titlebar { height: 23px; background: #fff; display: flex; align-items: center; position: relative; flex: none; }
.app-icon { margin-left: 2px; }
.title-text { margin-left: 5px; font-size: 12.5px; white-space: nowrap; color: #111; }
.winbtns { margin-left: auto; display: flex; height: 23px; }
.wb { height: 23px; display: block; position: relative; }
.wb-min::before { content: ""; position: absolute; left: 6px; top: 10px; width: 10px; height: 1px; background: #111; }
.wb-max::before { content: ""; position: absolute; left: 0; top: 7px; width: 8px; height: 8px; border: 1px solid #111; background: #fff; }
.wb-max::after { content: ""; position: absolute; left: 2px; top: 5px; width: 8px; height: 8px; border: 1px solid #111; border-left: 0; border-bottom: 0; }
.wb-close::before, .wb-close::after { content: ""; position: absolute; left: -4px; top: 10px; width: 13px; height: 1px; background: #111; transform: rotate(45deg); }
.wb-close::after { transform: rotate(-45deg); }
.wb-min { width: 27px; margin-right: 24px; }
.wb-max { width: 48px; }
.wb-close { width: 15px; margin-right: 13px; }

/* menu */
.menubar { height: 31px; flex: none; display: flex; background: #fafafa; }
.menu-main { width: 1124px; display: flex; align-items: center; padding: 1px 0 0 7px; gap: 11.2px; white-space: nowrap; background: #f6f6f6; height: 30px; }
.menu-new { margin-left: -3px; }
.menu-main .caret { margin-left: -6px; }
.menu-face { margin-left: -4px; }
.teal { color: #006a6e; margin-left: 113px; }
.menu-user { flex: 1; margin-left: 2px; display: flex; align-items: center; padding: 1px 4px 0; height: 30px; background: #f6f6f6; }
.phone { margin-left: 4px; font-size: 12.2px; }
.menu-user .caret { margin-left: 6px; }

/* toolbar 1 */
.toolbar1 { height: 26px; flex: none; display: flex; background: #f5f5f5; }
.band { display: flex; align-items: center; background: linear-gradient(#f9f9f9, #ebebeb); white-space: nowrap; padding-top: 1px; }
.band-quick { width: 150px; padding-left: 4px; padding-right: 3px; }
.band-tools { flex: 1; margin-left: 1px; padding-left: 6px; padding-right: 4px; }
.sigma { width: 16px; text-align: center; font: bold 14px/16px "Liberation Sans", sans-serif; color: #111; }
.combo2 { width: 62px; height: 22px; border: 1px solid #777; display: flex; align-items: center; color: #a0a0a0; padding-left: 3px; flex: none; gap: 4px; background: #f6f6f6; }
.swatch { width: 14px; height: 12px; background: #e4e4e4; border: 1px solid #ccc; }
.combo2 .caret { margin-left: 2px; }

/* workspace */
.workspace { margin-top: 4px; height: 624px; flex: none; display: flex; }
.nav { width: 165px; flex: none; display: flex; flex-direction: column; padding-bottom: 3px; }
.nav-head { height: 14px; background: #0050d4; color: #fff; display: flex; align-items: center; flex: none; padding: 0 2px 0 1px; letter-spacing: .4px; margin-bottom: 2px; }
.nav-head span { margin-right: auto; line-height: 14px; }
.nav-ic { width: 12px; height: 12px; margin-left: 6px; }
.nav-btn { flex: none; height: 22px; background: #f0f0f0; border: 1px solid #a8a8a8; display: flex; align-items: center; justify-content: center; margin-left: 1px; padding-top: 2px; }
.nav-first { margin-bottom: 1px; }
.nav-after { margin-top: 1px; }
.nav-ctl { height: 27px; flex: none; display: flex; align-items: center; gap: 5px; padding-left: 6px; background: linear-gradient(#fafafa, #eee); border-right: 1px solid #a8a8a8; margin-left: 1px; }
.ctl { width: 18px; height: 18px; }
.nav-box { flex: 1; min-height: 0; display: flex; border: 1px solid #999; margin: 0 1px 0 2px; background: #fff; overflow: hidden; padding-top: 2px; }

.tree { flex: 1; min-width: 0; position: relative; }
.tr { height: 16px; display: flex; align-items: center; white-space: nowrap; }
.lb { margin-left: 5px; }
.top { padding-left: 5px; }
.chev { width: 12px; height: 12px; flex: none; display: block; }
.dash2 { width: 6px; border-top: 1px dotted #777; flex: none; }
.kids { position: relative; margin-left: 12px; }
.kids::before { content: ""; position: absolute; left: 0; top: 0; bottom: 8px; border-left: 1px dotted #777; }
.dash { margin-left: 20px; width: 10px; border-top: 1px dotted #777; flex: none; }
.hl { display: flex; align-items: center; background: #d9d9d9; margin-left: -2px; padding-left: 2px; width: 93px; height: 16px; }
.col-ic { width: 12px; height: 12px; flex: none; margin-left: 1px; }

.vs { width: 16px; flex: none; display: flex; flex-direction: column; background: #f0f0f0; }
.vs-nav { margin-right: 1px; }
.vs-arrow { height: 16px; flex: none; display: flex; align-items: center; justify-content: center; }
.vs-thumb { background: #c8c8c8; flex: none; }
.vs-nav .vs-space { height: 75px; }
.vs-nav .vs-thumb { height: 374px; }
.vs-mid .vs-thumb { height: 397px; }
.vs-mid .vs-space { flex: 1; }

/* right */
.right { flex: 1; min-width: 0; display: flex; flex-direction: column; margin-left: 6px; }
.toolbar2 { height: 27px; flex: none; display: flex; align-items: center; padding-left: 4px; background: linear-gradient(#fafafa, #ececec); white-space: nowrap; }
.combo { width: 62px; height: 20px; background: #fff; display: flex; align-items: center; padding-left: 2px; flex: none; justify-content: space-between; padding-right: 3px; }
.combo .caret { margin-left: 0; }
.panes { flex: 1; min-height: 0; display: flex; margin-top: 2px; background: #fff; }

.mid { width: 184px; flex: none; display: flex; flex-direction: column; background: #f2f2f2; padding: 2px 1px 3px 1px; border-top: 1px solid #e8e8e8; }
.searchrow { display: flex; height: 25px; flex: none; margin-top: 1px; margin-bottom: 1px; background: #f4f4f4; }
.search-in { width: 157px; height: 24px; border: 1px solid #777; background: #fff; color: #8a8a8a; padding: 3px 2px; }
.search-btn { flex: 1; display: flex; align-items: center; justify-content: center; }
.mid-box { flex: 1; min-height: 0; display: flex; border: 1px solid #888; background: #fff; overflow: hidden; padding-top: 1px; }
.tree-mid { overflow: hidden; }
.chev-mid { margin-left: 4px; }
.dash3 { width: 7px; border-top: 1px dotted #777; flex: none; }
.kids-mid { margin-left: 30px; }
.dash4 { margin-left: 1px; width: 10px; border-top: 1px dotted #777; flex: none; }
.fb { width: 12px; height: 12px; flex: none; margin-left: 2px; }
.fbname { margin-left: 7px; font-family: "Liberation Mono", monospace; letter-spacing: -1.2px; }
.sel { display: flex; align-items: center; background: #cde6f9; height: 16px; width: 51px; margin-left: -1px; padding-left: 1px; }
.fbname-on { background: #2a6cc0; width: 28px; color: #0d0d2a; height: 16px; }

.props { flex: 1; min-width: 0; margin-left: 3px; display: flex; flex-direction: column; }
.tabs { height: 20px; flex: none; border-bottom: 1px solid #cfcfcf; }
.tab { display: inline-block; height: 20px; width: 64px; border: 1px solid #cfcfcf; border-bottom: 0; background: #fff; text-align: center; line-height: 18px; }
.sheet { flex: 1; min-height: 0; margin: 3px 4px 2px 4px; border: 1px solid #a8a8a8; padding: 1px; background: #fff; }

.grid { border-collapse: collapse; table-layout: fixed; width: 368px; }
.c-n { width: 21px; } .c-a { width: 190px; } .c-b { width: 126px; } .c-c { width: 31px; }
.grid th, .grid td { border: 1px solid #c2c2c2; padding: 0; height: 19px; font-weight: 400; white-space: nowrap; line-height: 16px; overflow: hidden; }
.grid th { height: 23px; text-align: center; }
.h-n { background: linear-gradient(#fff, #ececec); }
.h-a { background: linear-gradient(#fff, #ececec); }
.h-b { background: linear-gradient(#fbdca0, #f3bc5c); color: #660066; }
.h-c { background: #fff; }
.n { text-align: center; background: linear-gradient(#fafafa, #ececec); }
.a { padding-left: 20px !important; }
.b { padding-left: 2px !important; }
.b-in { padding-left: 6px !important; }
.link { color: #0000ee; }
.k { text-align: center; }
.cb { display: block; width: 13px; height: 13px; margin: -1px auto 1px; border: 1px solid #333; background: #fff; }
.on .n { background: #fbd38d; color: #6a0000; }
.on .a { background: #3399ff; color: #fff; }
.on .b { background: #deeeff; }
.a-more { color: #8c8c8c; padding-left: 2px !important; overflow: hidden; }
.pm { display: inline-block; width: 12px; height: 12px; line-height: 10px; text-align: center; border: 1px solid #aaa; color: #222; margin-right: 4px; vertical-align: -1px; background: #fff; }

/* status */
.status { height: 20px; flex: none; display: flex; gap: 3px; background: #f5f5f5; padding-top: 1px; }
.st { height: 19px; background: linear-gradient(#fff, #f4f4f4); border: 1px solid #e2e2e2; padding-left: 1px; line-height: 17px; white-space: nowrap; flex: none; }
.st1 { width: 147px; border-left: 0; } .st2 { width: 77px; } .st3 { width: 97px; } .st4 { width: 47px; } .st5 { width: 913px; } .st6 { width: 70px; }

/* taskbar */
.taskbar { height: 40px; flex: none; display: flex; align-items: center; color: #fff; background: linear-gradient(90deg, #00090f 0, #00090f 1296px, #000 1296px); }
.start { width: 48px; height: 40px; background: #000; display: flex; align-items: center; justify-content: center; }
.win { width: 16px; height: 16px; }
.tsearch { width: 344px; height: 40px; background: #333; display: flex; align-items: center; padding-left: 9px; }
.ring { width: 22px; height: 22px; border: 3px solid #ddd; border-radius: 50%; flex: none; }
.ts-text { margin-left: 5px; font-size: 14px; color: #8d9aa4; }
.ts-mic { width: 16px; height: 16px; margin-left: auto; margin-right: 12px; }
.slot { width: 48px; height: 40px; flex: none; display: flex; align-items: center; justify-content: center; position: relative; }
.ti { width: 22px; height: 22px; }
.ti-app { width: 24px; height: 24px; }
.tsep { width: 1px; height: 16px; background: #4a4a4a; flex: none; }
.active { background: #39444a; }
.active::after { content: ""; position: absolute; left: 0; right: 0; bottom: 0; height: 2px; background: #76b9ed; }
.run::after { content: ""; position: absolute; left: 3px; right: 5px; bottom: 0; height: 2px; background: #76b9ed; }
.tray-link { color: #a9a9a9; flex: none; }
.cpu, .clock { display: flex; flex-direction: column; align-items: center; flex: none; line-height: 18px; color: #ddd; }
.cpu { width: 60px; }
.clock { width: 60px; color: #ccc; }
.tr-i { width: 16px; height: 16px; flex: none; }
.tr-kb { width: 24px; height: 16px; flex: none; }
.tr-zh { width: 14px; font-size: 13px; font-weight: 700; flex: none; }
.s-mini { width: 16px; height: 16px; background: #e8501e; color: #fff; font: bold 13px/16px "Liberation Sans", sans-serif; text-align: center; border-radius: 2px; flex: none; transform: rotate(-6deg); }

/* overlays */
.ime { position: absolute; width: 205px; height: 27px; }
.ime-top { left: 593px; top: 0; }
.ime-side { left: 1161px; top: 141px; }
.ime-bar { position: absolute; left: 20px; top: 3px; width: 184px; height: 23px; background: #f0f6fc; border: 1px solid #c6d6e6; display: flex; align-items: center; padding-left: 7px; }
.ime-it { width: 22px; flex: none; display: flex; align-items: center; justify-content: center; color: #1e73be; }
.ime-zh { font-size: 15px; font-weight: 700; }
.ime-p { font: bold 12px/12px "Liberation Sans", sans-serif; }
.ime-logo { position: absolute; left: 0; top: 0; z-index: 1; width: 26px; height: 26px; background: #f4511e; border-radius: 3px; color: #fff; font: bold 24px/26px "Liberation Sans", sans-serif; text-align: center; transform: rotate(-8deg); }

.speed { position: absolute; left: 888px; top: 22px; width: 128px; height: 50px; }
.orb { position: absolute; left: 0; top: 0; width: 50px; height: 50px; border-radius: 50%; border: 3px solid #d6d6d6; background: linear-gradient(#125f38 0, #1c7a49 30%, #3cc25a 30%, #37bb55 100%); color: #f2fff4; text-align: center; font: 14px/44px "Liberation Sans", sans-serif; box-shadow: 0 1px 3px #777; }
.pill { position: absolute; left: 27px; top: 5px; width: 101px; height: 39px; border: 1px solid #aaa; border-radius: 0 20px 20px 0; background: linear-gradient(#f4f4f4, #dcdcdc); box-shadow: 0 1px 2px #999; }
.rates { position: absolute; left: 25px; top: 4px; width: 47px; display: flex; flex-direction: column; font: 9.5px/15px "Noto Sans", sans-serif; color: #222; }
.rate { display: flex; justify-content: space-between; align-items: center; }
.arr { width: 8px; height: 10px; flex: none; }
.plus { position: absolute; left: 75px; top: 10px; width: 17px; height: 17px; border-radius: 50%; background: #3a78d4; color: #fff; font: bold 14px/17px "Liberation Sans", sans-serif; text-align: center; }
.reddot { position: absolute; left: 86px; top: 9px; width: 8px; height: 8px; border-radius: 50%; background: #d8232a; }

.mark { position: absolute; left: 526px; top: 345px; width: 170px; height: 130px; }
```
